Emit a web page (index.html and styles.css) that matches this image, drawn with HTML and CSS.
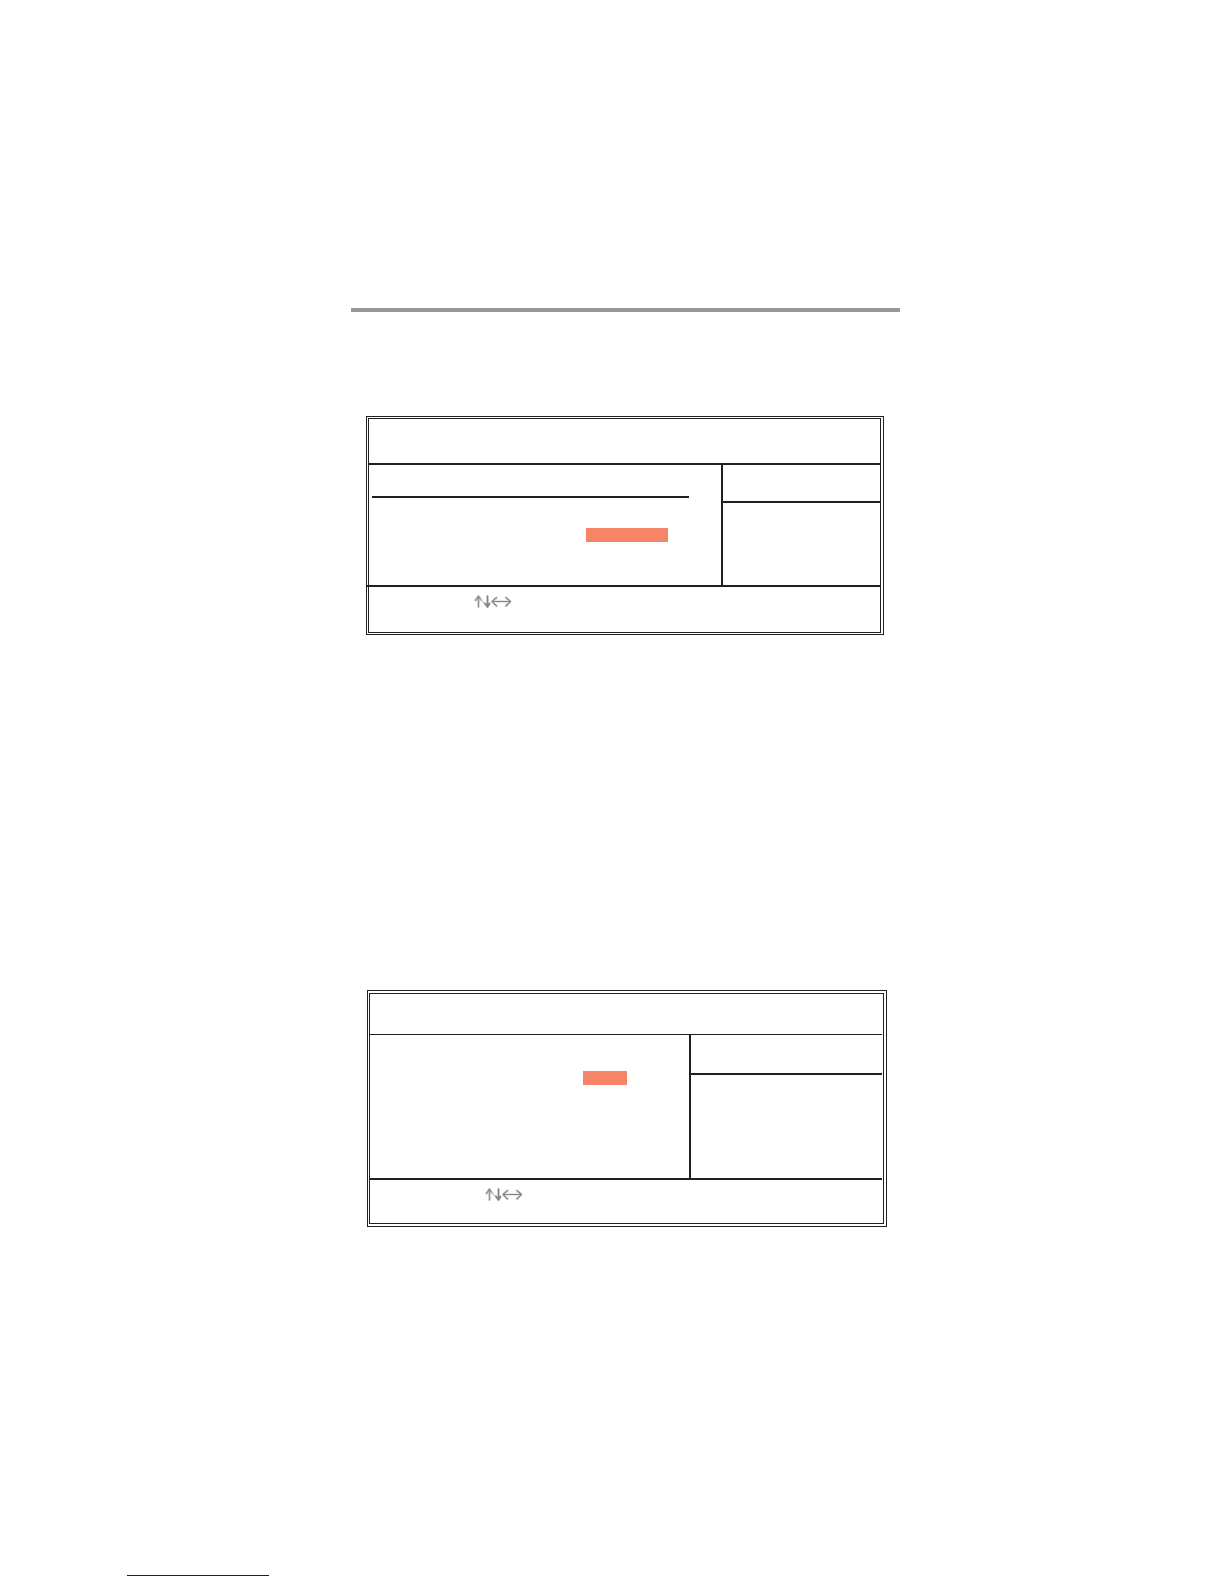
FILE: index.html
```
<!DOCTYPE html>
<html lang="en">
<head>
    <meta charset="UTF-8">
    <meta name="viewport" content="width=device-width, initial-scale=1.0">
    <title>BIOS Setup</title>
    <link rel="stylesheet" href="styles.css">
</head>
<body>
    <!-- arrow keys, shared by both panels -->
    <svg class="sprite" aria-hidden="true">
        <symbol id="arrow-keys" viewBox="0 0 38 13">
            <g fill="none" stroke-linecap="round" stroke-linejoin="round">
                <g stroke="#e8e8e8" stroke-width="3">
                    <path d="M4.5 1.5V11.5M1.5 5L4.5 1.5L7 4.5"/>
                    <path d="M13.5 1.5V11.5M11 8.5L13.5 11.5L15.5 8.5"/>
                    <path d="M18.5 6.5H36M22.5 3L18.5 6.5L22.5 10.5M32 3L36 6.5L32 10.5"/>
                </g>
                <path d="M4.5 1V12M1.5 5.5L4.5 1L7 5" stroke="#949494" stroke-width="1.4"/>
                <path d="M7 5L11 9" stroke="#cccccc" stroke-width="1.4"/>
                <path d="M13.5 1V12M11 8.5L13.5 12L15.5 8.5" stroke="#848484" stroke-width="1.6"/>
                <path d="M18 6.5H36.5M22.5 2.5L18 6.5L22.5 11" stroke="#868686" stroke-width="1.2"/>
                <path d="M32 2.5L36.5 6.5L32 11" stroke="#868686" stroke-width="1.3"/>
            </g>
        </symbol>
    </svg>

    <main class="page">
        <hr class="rule">

        <section class="panel panel-first">
            <div class="frame">
                <header class="panel-head"></header>
                <div class="panel-body">
                    <div class="settings">
                        <div class="settings-title"></div>
                        <div class="highlight"></div>
                    </div>
                    <aside class="help">
                        <div class="help-title"></div>
                    </aside>
                </div>
                <footer class="keys">
                    <svg class="arrows"><use href="#arrow-keys"/></svg>
                </footer>
            </div>
        </section>

        <section class="panel panel-second">
            <div class="frame">
                <header class="panel-head"></header>
                <div class="panel-body">
                    <div class="settings">
                        <div class="highlight"></div>
                    </div>
                    <aside class="help">
                        <div class="help-title"></div>
                    </aside>
                </div>
                <footer class="keys">
                    <svg class="arrows"><use href="#arrow-keys"/></svg>
                </footer>
            </div>
        </section>
    </main>

    <a class="source-link" href="#" aria-label="Source"></a>
</body>
</html>
```

FILE: styles.css
```
:root {
    --ink: #231f20;
    --accent: #f68567;
    --rule: #989898;
    --link: #10109c;
}

* {
    box-sizing: border-box;
}

body {
    margin: 0;
    min-height: 100vh;
    display: flex;
    flex-direction: column;
    background: #fff;
    font-family: "Liberation Sans", Arial, sans-serif;
}

.sprite {
    position: absolute;
    width: 0;
    height: 0;
}

.page {
    padding: 308px 324px 0 351px;
}

.rule {
    height: 4px;
    margin: 0;
    border: none;
    background: var(--rule);
}

/* double outline: panel is the outer line, frame the inner one */
.panel {
    border: 1px solid var(--ink);
}

.frame {
    border: 1px solid var(--ink);
}

.panel-head {
    border-bottom: 2px solid var(--ink);
}

.panel-body {
    display: flex;
    border-bottom: 2px solid var(--ink);
}

.settings {
    flex: 1;
}

.help {
    border-left: 2px solid var(--ink);
}

.help-title {
    height: 38px;
    border-bottom: 2px solid var(--ink);
}

.highlight {
    height: 14px;
    margin-left: auto;
    background: var(--accent);
}

.keys {
    padding-top: 8px;
}

.arrows {
    display: block;
    width: 38px;
    height: 13px;
}

.panel-first {
    margin: 104px 16px 0 15px;
    padding: 1px 2px 1px 1px;
}

.panel-first .panel-head {
    height: 46px;
}

/* bottom rule runs out to the outer line on the left */
.panel-first .panel-body {
    height: 122px;
    margin-left: -3px;
    padding-left: 3px;
}

.panel-first .settings {
    padding: 0 32px 0 3px;
}

.panel-first .settings-title {
    height: 33px;
    border-bottom: 2px solid var(--ink);
}

.panel-first .highlight {
    width: 82px;
    margin-top: 30px;
    margin-right: 21px;
}

.panel-first .help {
    width: 159px;
}

.panel-first .keys {
    height: 45px;
    padding-left: 105px;
}

.panel-second {
    margin: 355px 13px 0 16px;
    padding: 2px 2px 2px 1px;
}

.panel-second .frame {
    padding-right: 1px;
}

.panel-second .panel-head {
    height: 41px;
    border-bottom-width: 1px;
}

.panel-second .panel-body {
    height: 145px;
}

.panel-second .help-title {
    height: 40px;
}

.panel-second .highlight {
    width: 44px;
    margin-top: 36px;
    margin-right: 62px;
}

.panel-second .help {
    width: 193px;
}

.panel-second .keys {
    height: 43px;
    padding-left: 115px;
}

.source-link {
    width: 142px;
    height: 16px;
    margin: auto 0 8px 127px;
    border-bottom: 1px solid var(--link);
}
```
